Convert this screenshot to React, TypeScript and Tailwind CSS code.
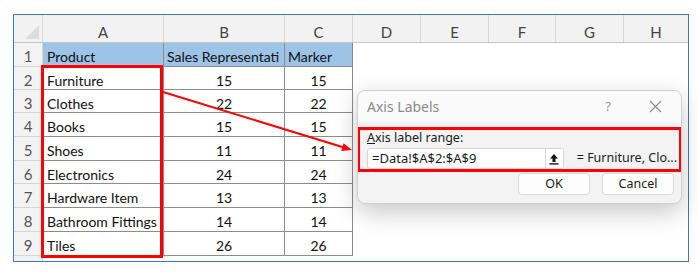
const cols = [
  { name: "A", w: "w-[121px]" },
  { name: "B", w: "w-[121px]" },
  { name: "C", w: "w-[68px]" },
  { name: "D", w: "w-[68px]" },
  { name: "E", w: "w-[68px]" },
  { name: "F", w: "w-[67px]" },
  { name: "G", w: "w-[68px]" },
  { name: "H", w: "flex-1" },
];

const rows = [
  { n: 2, product: "Furniture", sales: 15, marker: 15, h: "h-[23px]" },
  { n: 3, product: "Clothes", sales: 22, marker: 22, h: "h-[23px]" },
  { n: 4, product: "Books", sales: 15, marker: 15, h: "h-[24px]" },
  { n: 5, product: "Shoes", sales: 11, marker: 11, h: "h-[24px]" },
  { n: 6, product: "Electronics", sales: 24, marker: 24, h: "h-[23px]" },
  { n: 7, product: "Hardware Item", sales: 13, marker: 13, h: "h-[24px]" },
  { n: 8, product: "Bathroom Fittings", sales: 14, marker: 14, h: "h-[24px]" },
  { n: 9, product: "Tiles", sales: 26, marker: 26, h: "h-[24px]" },
];

function RowNum({ n }: { n: number }) {
  return (
    <div className="flex w-[29px] shrink-0 items-center justify-center border-r border-b border-[#d6d6d6] bg-[#f3f3f3] pt-[4px] text-[15px] text-[#555]">
      {n}
    </div>
  );
}

function Blank() {
  return <div className="flex-1 bg-white" />;
}

function Dialog() {
  return (
    <div className="absolute left-[357px] top-[90px] h-[114px] w-[325px] overflow-hidden rounded-[8px] border border-[#cfcfcf] bg-[#f3f3f3] shadow-[0_8px_24px_rgba(0,0,0,0.22)] [font-family:'Noto_Sans',sans-serif]">
      <div className="flex h-[31px] items-center bg-[#fafafa] pl-[9px] pr-[14px]">
        <span className="text-[14px] text-[#8a8a8a]">Axis Labels</span>
        <span className="ml-auto mr-[38px] text-[13px] text-[#999]">?</span>
        <svg width="13" height="13" viewBox="0 0 13 13" className="mr-[5px]">
          <path d="M1 1 L12 12 M12 1 L1 12" stroke="#8a8a8a" strokeWidth="1.1" />
        </svg>
      </div>
      <div className="mx-[-1px] mt-[5px] h-[45px] border-[3px] border-[#ff0000] pl-[7px] pr-[2px]">
        <div className="text-[12.5px] leading-[16px] text-[#1a1a1a]">
          <span className="underline">A</span>xis label range:
        </div>
        <div className="mt-[2px] flex items-center">
          <div className="flex h-[21px] w-[208px] items-center rounded-[3px] border border-[#d6d6d6] bg-white pl-[4px] text-[13px] text-[#1a1a1a]">
            =Data!$A$2:$A$9
            <div className="ml-auto flex h-[19px] w-[18px] items-center justify-center border-l border-[#d6d6d6] bg-white">
              <svg width="10" height="12" viewBox="0 0 10 12">
                <path d="M5 1 L9 5.5 H6.5 V9 H3.5 V5.5 H1 Z" fill="#111" />
                <rect x="0.5" y="10.2" width="9" height="1.4" fill="#111" />
              </svg>
            </div>
          </div>
          <span className="ml-[13px] whitespace-nowrap text-[12.5px] text-[#1a1a1a]">= Furniture, Clo...</span>
        </div>
      </div>
      <div className="mt-[1px] flex justify-end gap-[12px] pr-[7px]">
        <div className="flex h-[22px] w-[72px] items-center justify-center rounded-[4px] border border-[#d9d9d9] bg-[#fdfdfd] text-[12.5px] text-[#1a1a1a]">
          OK
        </div>
        <div className="flex h-[22px] w-[72px] items-center justify-center rounded-[4px] border border-[#d9d9d9] bg-[#fdfdfd] text-[12.5px] text-[#1a1a1a]">
          Cancel
        </div>
      </div>
    </div>
  );
}

export default function App() {
  return (
    <div className="relative h-[272px] w-[697px] bg-white pl-[13px] pt-[14px] [font-family:Lato,'Liberation_Sans',sans-serif]">
      <div className="flex h-[248px] w-[676px] flex-col border border-[#4472c4] bg-white">
        {/* column headers */}
        <div className="flex h-[28px] shrink-0 border-b border-[#c6c6c6] bg-[#f2f2f2]">
          <div className="relative w-[29px] shrink-0 border-r border-[#d6d6d6]">
            <svg width="14" height="14" viewBox="0 0 14 14" className="absolute bottom-[3px] right-[3px]">
              <path d="M14 0 L14 14 L0 14 Z" fill="#dcdcdc" />
            </svg>
          </div>
          {cols.map((c) => (
            <div
              key={c.name}
              className={`${c.w} flex shrink-0 items-center justify-center border-r border-[#d6d6d6] pt-[7px] text-[15px] text-[#444] last:border-r-0`}
            >
              {c.name}
            </div>
          ))}
        </div>

        {/* row 1 */}
        <div className="flex h-[24px] shrink-0 text-[14px] text-[#111]">
          <RowNum n={1} />
          <div className="flex w-[121px] shrink-0 items-center border-r border-b border-[#8c8c8c] bg-[#9dc3e6] pl-[4px] pt-[4px]">
            Product
          </div>
          <div className="flex w-[121px] shrink-0 items-center overflow-hidden whitespace-nowrap border-r border-b border-[#8c8c8c] bg-[#9dc3e6] pl-[3px] pt-[4px]">
            Sales Representati
          </div>
          <div className="flex w-[68px] shrink-0 items-center border-r border-b border-[#8c8c8c] bg-[#9dc3e6] pl-[3px] pt-[4px]">
            Marker
          </div>
          <Blank />
        </div>

        {rows.map((r) => (
          <div key={r.n} className={`flex ${r.h} shrink-0 text-[14px] text-[#111]`}>
            <RowNum n={r.n} />
            <div className="flex w-[121px] shrink-0 items-center whitespace-nowrap border-r border-b border-[#8c8c8c] pl-[4px] pt-[4px]">
              {r.product}
            </div>
            <div className="flex w-[121px] shrink-0 items-center justify-center border-r border-b border-[#8c8c8c] pt-[4px]">
              {r.sales}
            </div>
            <div className="flex w-[68px] shrink-0 items-center justify-center border-r border-b border-[#8c8c8c] pt-[4px]">
              {r.marker}
            </div>
            <Blank />
          </div>
        ))}

        <div className="flex flex-1">
          <div className="w-[29px] shrink-0 border-r border-[#d6d6d6] bg-[#f3f3f3]" />
          <Blank />
        </div>
      </div>

      {/* highlight around A2:A9 */}
      <div className="absolute left-[41px] top-[65px] h-[193px] w-[122px] border-[3px] border-[#ff0000]" />

      <Dialog />

      {/* arrow */}
      <svg className="pointer-events-none absolute left-0 top-0" width="697" height="272">
        <line x1="163" y1="92" x2="344" y2="147.5" stroke="#ff0000" strokeWidth="2" />
        <polygon points="352,150 341.2,150.9 343.6,143.3" fill="#ff0000" />
      </svg>
    </div>
  );
}
